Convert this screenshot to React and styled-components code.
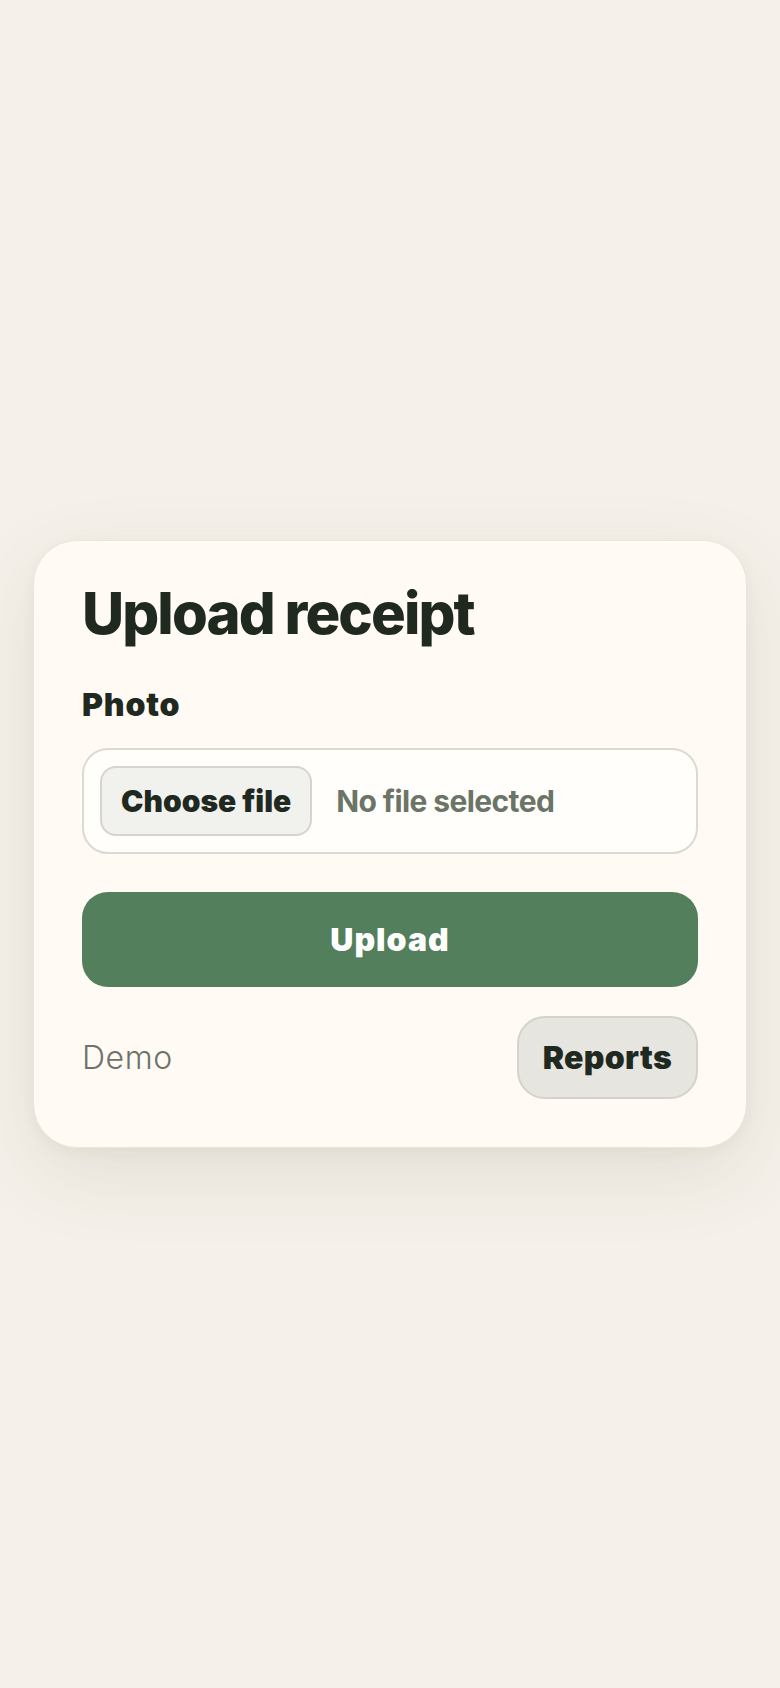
import React from "react";
import styled, { createGlobalStyle } from "styled-components";

const GlobalStyle = createGlobalStyle`
  html, body {
    margin: 0;
    padding: 0;
    background: #f5f1ea;
    font-family: Inter, Lato, "Noto Sans", sans-serif;
    -webkit-font-smoothing: antialiased;
  }
  * { box-sizing: border-box; }
`;

const Page = styled.main`
  min-height: 100vh;
  display: flex;
  align-items: center;
  justify-content: center;
  padding: 0 33px;
`;

const Card = styled.section`
  width: 100%;
  background: #fffaf4;
  border: 1px solid #ebe6dd;
  border-radius: 44px;
  padding: 41px 48px 48px;
  box-shadow: 0 26px 80px rgba(80, 64, 36, 0.11), 0 4px 14px rgba(80, 64, 36, 0.04);
  display: flex;
  flex-direction: column;
`;

const Title = styled.h1`
  margin: 0;
  font-size: 58px;
  font-weight: 800;
  line-height: 1.1;
  letter-spacing: -1.9px;
  color: #1f291f;
`;

const Field = styled.div`
  margin-top: 40px;
  display: flex;
  flex-direction: column;
  gap: 23px;
`;

const Label = styled.label`
  font-size: 32px;
  font-weight: 900;
  line-height: 1.2;
  letter-spacing: 0.8px;
  color: #1f291f;
`;

const FileBox = styled.label`
  height: 106px;
  border: 2px solid #dcd9d2;
  border-radius: 26px;
  background: #fffefb;
  padding: 0 16px;
  display: flex;
  align-items: center;
  gap: 24px;
  cursor: pointer;
`;

const HiddenInput = styled.input`
  display: none;
`;

const ChooseButton = styled.span`
  height: 70px;
  padding: 0 19px;
  border: 2px solid #d6d4ce;
  border-radius: 16px;
  background: #f1f1ee;
  display: flex;
  align-items: center;
  font-size: 30px;
  font-weight: 900;
  color: #1f291f;
`;

const FileName = styled.span`
  font-size: 30px;
  font-weight: 700;
  letter-spacing: -0.6px;
  color: #6b7467;
`;

const UploadButton = styled.button`
  margin-top: 38px;
  width: 100%;
  height: 95px;
  border: 0;
  border-radius: 26px;
  background: #537f5c;
  color: #ffffff;
  font-family: inherit;
  font-size: 32px;
  font-weight: 900;
  letter-spacing: 1px;
  cursor: pointer;
`;

const Footer = styled.div`
  margin-top: 29px;
  display: flex;
  justify-content: space-between;
  align-items: center;
`;

const DemoLink = styled.a`
  font-size: 32px;
  font-weight: 300;
  letter-spacing: 0.6px;
  color: #6c7368;
  text-decoration: none;
`;

const ReportsButton = styled.button`
  height: 83px;
  padding: 0 24px;
  border: 2px solid #d5d2cb;
  border-radius: 28px;
  background: #e7e5df;
  font-family: inherit;
  font-size: 32px;
  font-weight: 900;
  letter-spacing: 0.3px;
  color: #1f291f;
  cursor: pointer;
`;

export default function App() {
  return (
    <>
      <GlobalStyle />
      <Page>
        <Card>
          <Title>Upload receipt</Title>
          <Field>
            <Label htmlFor="photo">Photo</Label>
            <FileBox>
              <HiddenInput id="photo" type="file" accept="image/*" />
              <ChooseButton>Choose file</ChooseButton>
              <FileName>No file selected</FileName>
            </FileBox>
          </Field>
          <UploadButton type="button">Upload</UploadButton>
          <Footer>
            <DemoLink href="#">Demo</DemoLink>
            <ReportsButton type="button">Reports</ReportsButton>
          </Footer>
        </Card>
      </Page>
    </>
  );
}
